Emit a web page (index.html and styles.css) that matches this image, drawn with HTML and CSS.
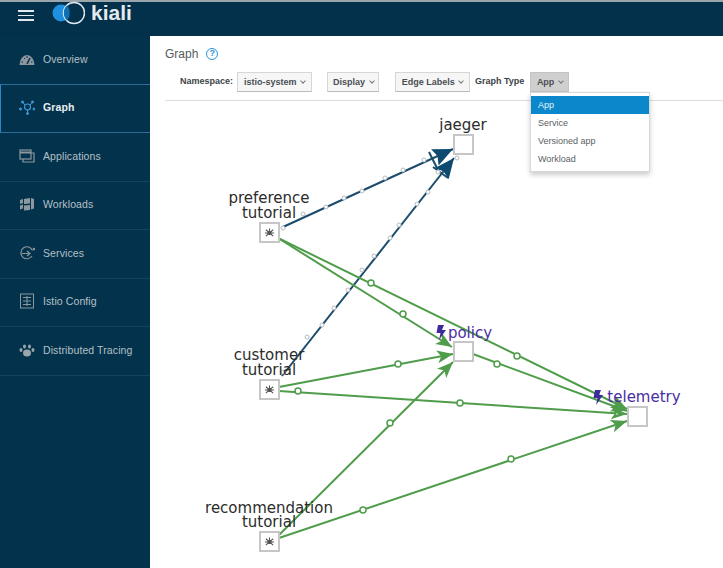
FILE: index.html
```html
<!DOCTYPE html>
<html lang="en">
<head>
<meta charset="UTF-8">
<meta name="viewport" content="width=device-width, initial-scale=1.0">
<title>Kiali - Graph</title>
<link rel="stylesheet" href="styles.css">
</head>
<body>
  <header class="topbar">
    <div class="burger"><span></span><span></span><span></span></div>
    <svg class="logo-mark" width="42" height="28" viewBox="0 0 42 28">
      <circle cx="18" cy="12" r="8.500" fill="#1f8fe0"/>
      <circle cx="31" cy="12" r="10.500" fill="#03304a" stroke="#dfeaf2" stroke-width="1.500"/>
      <path d="M20.800 12a10 10 0 0 1 3.200-7.400 8.500 8.500 0 0 1 2.500 7.400 8.500 8.500 0 0 1-2.500 7.400 10 10 0 0 1-3.200-7.400z" fill="#0f6fb5"/>
    </svg>
    <span class="logo-text">kiali</span>
  </header>

  <div class="page">
    <nav class="sidebar">
      <a class="nav-item">
        <svg class="nav-icon" viewBox="0 0 16 16"><path d="M.5 14A7.500 10 0 0 1 15.500 14z" fill="#8d979e"/><path d="M8 13 11 7" stroke="#03304a" stroke-width="1.500"/><path d="M2.500 11h1.500M5 7l1 1M8 5v2M12 11h1.500" stroke="#03304a"/></svg>
        Overview
      </a>
      <a class="nav-item active">
        <svg class="nav-icon" viewBox="0 0 16 16" fill="#3f9bdc" stroke="#3f9bdc"><circle cx="8.500" cy="8" r="3" fill="none" stroke-width="1.200"/><path d="M6 6 4 3.500M11 6l2-2.500M8.500 11v2.500" stroke-width="1"/><circle cx="3.500" cy="3" r="1"/><circle cx="13.500" cy="3" r="1"/><circle cx="1.500" cy="10" r="1"/><circle cx="15" cy="10" r="1"/><circle cx="8.500" cy="14.500" r="1"/></svg>
        Graph
      </a>
      <a class="nav-item">
        <svg class="nav-icon" viewBox="0 0 16 16" fill="none" stroke="#8d979e" stroke-width="1.200"><rect x="1" y="2" width="11" height="9"/><path d="M1 4.500h11" stroke-width="2"/><path d="M12 5h3v9H4v-3"/></svg>
        Applications
      </a>
      <a class="nav-item">
        <svg class="nav-icon" viewBox="0 0 16 16" fill="#8d979e"><path d="M1 4l3-1v4l-3 1zM1 9.500l3-1v4l-3 1zM5 3l6-1v5.500l-6 .5zM5 9.500l6-.5v5l-6 .5zM12 2l3 1v9.500l-3 1z"/></svg>
        Workloads
      </a>
      <a class="nav-item">
        <svg class="nav-icon" viewBox="0 0 16 16" fill="none" stroke="#8d979e" stroke-width="1.200"><path d="M13.500 5.500A6 6 0 1 0 13 11"/><path d="M3 8.500h8M8 6l3 2.500L8 11"/><circle cx="15" cy="4" r=".7"/></svg>
        Services
      </a>
      <a class="nav-item">
        <svg class="nav-icon" viewBox="0 0 16 16" fill="none" stroke="#8d979e"><rect x="1.500" y="1" width="13" height="14"/><path d="M4 4.500h8M4 8h8M4 11.500h8M8 3v10"/></svg>
        Istio Config
      </a>
      <a class="nav-item">
        <svg class="nav-icon" viewBox="0 0 16 16" fill="#9aa4ab"><ellipse cx="8" cy="11" rx="4" ry="3.500"/><ellipse cx="5.500" cy="4.500" rx="1.500" ry="2"/><ellipse cx="10.500" cy="4.500" rx="1.500" ry="2"/><ellipse cx="2" cy="8" rx="1.500" ry="2"/><ellipse cx="14" cy="8" rx="1.500" ry="2"/></svg>
        Distributed Tracing
      </a>
    </nav>

    <main class="content">
      <div class="title-row">
        <h1 class="title">Graph</h1>
        <span class="help">?</span>
      </div>

      <div class="toolbar">
        <label class="tool-label">Namespace:</label>
        <button class="btn btn-namespace">istio-system <i class="caret"></i></button>
        <button class="btn btn-display">Display <i class="caret"></i></button>
        <button class="btn btn-edges">Edge Labels <i class="caret"></i></button>
        <label class="tool-label tool-label-type">Graph Type</label>
        <button class="btn btn-open">App <i class="caret"></i></button>
        <ul class="menu">
          <li class="menu-item selected">App</li>
          <li class="menu-item">Service</li>
          <li class="menu-item">Versioned app</li>
          <li class="menu-item">Workload</li>
        </ul>
      </div>

      <svg class="graph" viewBox="150 101 573 467">
        <defs>
          <marker id="green-head" markerWidth="17" markerHeight="15" refX="16" refY="7.500" markerUnits="userSpaceOnUse" orient="auto">
            <path d="M0 1 16 7.500 0 14 4 7.500z" fill="#4f9d4b"/>
          </marker>
          <marker id="blue-head" markerWidth="21" markerHeight="20" refX="20" refY="10" markerUnits="userSpaceOnUse" orient="auto">
            <path d="M0 1 20 10 0 19 3 10z" fill="#0d4a70"/>
          </marker>
          <symbol id="app-icon" viewBox="0 0 12 12">
            <circle cx="6" cy="6.500" r="2.200" fill="#3a3a3a"/>
            <path d="M2 3 10 10M10 3 2 10M6 6.500V1.500M1 6.500h10" stroke="#555" stroke-width="1.200" fill="none"/>
          </symbol>
        </defs>

        <g class="edges-blue">
          <path d="M283 227 453 149" marker-end="url(#blue-head)"/>
          <path d="M282 376 454 158" marker-end="url(#blue-head)"/>
          <path d="M429 152 437 168M433 167 448 178"/>
        </g>
        <g class="edges-green">
          <path d="M278 238 452 347" marker-end="url(#green-head)"/>
          <path d="M278 238 627 409" marker-end="url(#green-head)"/>
          <path d="M279 387 453 354" marker-end="url(#green-head)"/>
          <path d="M279 391 627 414" marker-end="url(#green-head)"/>
          <path d="M279 535 453 362" marker-end="url(#green-head)"/>
          <path d="M279 538 627 421" marker-end="url(#green-head)"/>
          <path d="M473 354 627 411" marker-end="url(#green-head)"/>
        </g>

        <g class="dots-blue">
          <circle cx="283" cy="228" r="2"/><circle cx="303" cy="214" r="2"/><circle cx="326" cy="207" r="2"/>
          <circle cx="344" cy="198" r="2"/><circle cx="362" cy="191" r="2"/><circle cx="385" cy="178" r="2"/>
          <circle cx="403" cy="170" r="2"/><circle cx="424" cy="160" r="2"/><circle cx="457" cy="158" r="2"/>
          <circle cx="438" cy="172" r="2"/><circle cx="428" cy="192" r="2"/><circle cx="417" cy="204" r="2"/>
          <circle cx="399" cy="225" r="2"/><circle cx="390" cy="238" r="2"/><circle cx="374" cy="256" r="2"/>
          <circle cx="362" cy="270" r="2"/><circle cx="348" cy="290" r="2"/><circle cx="334" cy="308" r="2"/>
          <circle cx="322" cy="325" r="2"/><circle cx="307" cy="337" r="2"/><circle cx="283" cy="372" r="2"/>
        </g>
        <g class="dots-green">
          <circle cx="371" cy="283" r="3"/><circle cx="403" cy="314" r="3"/><circle cx="517" cy="356" r="3"/>
          <circle cx="398" cy="364" r="3"/><circle cx="298" cy="391" r="3"/><circle cx="460" cy="403" r="3"/>
          <circle cx="390" cy="423" r="3"/><circle cx="363" cy="510" r="3"/><circle cx="511" cy="459" r="3"/>
          <circle cx="497" cy="364" r="3"/><circle cx="617" cy="414" r="1.500"/>
        </g>

        <g class="nodes">
          <rect x="454" y="135" width="19" height="19"/>
          <rect x="260" y="223" width="19" height="19"/>
          <rect x="260" y="380" width="19" height="19"/>
          <rect x="260" y="532" width="19" height="19"/>
          <rect x="454" y="342" width="19" height="19"/>
          <rect x="628" y="407" width="19" height="19"/>
        </g>
        <use href="#app-icon" x="264" y="227" width="11" height="11"/>
        <use href="#app-icon" x="264" y="384" width="11" height="11"/>
        <use href="#app-icon" x="264" y="536" width="11" height="11"/>

        <g class="labels">
          <text x="463" y="130">jaeger</text>
          <text y="203"><tspan x="269">preference</tspan><tspan x="269" dy="15">tutorial</tspan></text>
          <text y="360"><tspan x="269">customer</tspan><tspan x="269" dy="15">tutorial</tspan></text>
          <text y="513"><tspan x="269">recommendation</tspan><tspan x="269" dy="14">tutorial</tspan></text>
        </g>
        <g class="labels-service">
          <text x="470" y="338">policy</text>
          <text x="644" y="402">telemetry</text>
        </g>
        <path class="bolt" d="M438 325h6l-2 5h4l-7 10 1.500-7h-4z"/>
        <path class="bolt" d="M595 390h6l-2 5h4l-7 10 1.500-7h-4z"/>
      </svg>
    </main>
  </div>
</body>
</html>
```

FILE: styles.css
```css
* {
  box-sizing: border-box;
}

html, body {
  height: 100%;
}

body {
  margin: 0;
  overflow: hidden;
  display: flex;
  flex-direction: column;
  font-family: "Liberation Sans", Arial, sans-serif;
  background: #fff;
  color: #3d4348;
}

/* top bar */
.topbar {
  height: 36px;
  flex: none;
  display: flex;
  align-items: center;
  padding-left: 18px;
  background: #03304a;
  border-top: 2px solid #9aa5ab;
}

.burger {
  width: 16px;
  display: flex;
  flex-direction: column;
  gap: 3px;
  margin-top: -7px;
}

.burger span {
  height: 1.500px;
  background: #e3e9ed;
}

.logo-mark {
  margin: -9px 0 0 9px;
}

.logo-text {
  margin: -13px 0 0 6px;
  color: #e4ebef;
  font-size: 21px;
  font-weight: 700;
}

.page {
  flex: 1;
  display: flex;
  min-height: 0;
}

/* left nav */
.sidebar {
  width: 150px;
  flex: none;
  background: #03324c;
}

.nav-item {
  height: 48.500px;
  display: flex;
  align-items: center;
  gap: 8px;
  padding: 0 0 2px 19px;
  border-bottom: 1px solid #12445f;
  color: #b4c0c8;
  font-size: 10.500px;
  letter-spacing: .1px;
}

.nav-item.active {
  color: #e9eef1;
  font-weight: 700;
  border-left: 1px solid #2f86c2;
  padding-left: 18px;
  border-top: 1px solid #2a6f9c;
  border-bottom: 1px solid #2a6f9c;
  margin-top: -1px;
  height: 49.500px;
}

.nav-icon {
  width: 16px;
  height: 16px;
  flex: none;
}

/* main area */
.content {
  flex: 1;
  min-width: 0;
  display: flex;
  flex-direction: column;
}

.title-row {
  display: flex;
  align-items: center;
  gap: 8px;
  padding: 7px 0 0 15px;
  height: 28px;
}

.title {
  margin: 0;
  font-size: 12px;
  font-weight: 400;
  color: #555b60;
}

.help {
  width: 12px;
  height: 12px;
  border: 1.500px solid #2a94d6;
  border-radius: 50%;
  color: #2a94d6;
  font-size: 9px;
  font-weight: 700;
  line-height: 9px;
  text-align: center;
}

.toolbar {
  position: relative;
  height: 37px;
  flex: none;
  margin-left: 15px;
  padding: 8px 0 0 15px;
  display: flex;
  align-items: flex-start;
  border-bottom: 1px solid #dcdcdc;
}

.tool-label {
  font-size: 9px;
  font-weight: 700;
  line-height: 19px;
  margin-right: 4px;
}

.tool-label-type {
  margin: 0 5px 0 5px;
}

.btn {
  height: 20px;
  padding: 0 5px;
  border: 1px solid #d6d6d6;
  border-bottom-color: #bbb;
  background: #f6f6f6;
  color: #4a4f54;
  font-family: inherit;
  font-size: 9px;
  font-weight: 700;
  white-space: nowrap;
}

.btn-namespace {
  width: 75px;
  margin-right: 15px;
}

.btn-display {
  width: 52px;
  margin-right: 16px;
}

.btn-edges {
  width: 75px;
}

.btn-open {
  width: 39px;
  margin-left: 1px;
  background: #cfcfcf;
  border-color: #c4c4c4;
}

.caret {
  display: inline-block;
  width: 4px;
  height: 4px;
  margin: 0 0 2px 2px;
  border-right: 1px solid #777;
  border-bottom: 1px solid #777;
  transform: rotate(45deg);
}

.menu {
  position: absolute;
  top: 28px;
  left: 365px;
  z-index: 2;
  width: 120px;
  height: 80px;
  margin: 0;
  padding: 3px 0;
  list-style: none;
  background: #fff;
  border: 1px solid #d8d8d8;
  box-shadow: 0 3px 5px rgba(0, 0, 0, .2);
}

.menu-item {
  height: 18px;
  padding-left: 7px;
  font-size: 9px;
  line-height: 18px;
  color: #5a5f63;
}

.menu-item.selected {
  background: #0b87cc;
  color: #e8f3fa;
}

/* topology */
.graph {
  display: block;
  width: 573px;
  height: 467px;
}

.edges-blue path {
  fill: none;
  stroke: #1c4c6c;
  stroke-width: 2;
}

.edges-green path {
  fill: none;
  stroke: #4f9d4b;
  stroke-width: 2;
}

.dots-blue circle {
  fill: #fff;
  stroke: #b4bcc2;
}

.dots-green circle {
  fill: #fff;
  stroke: #4f9d4b;
  stroke-width: 1.500;
}

.nodes rect {
  fill: #fff;
  stroke: #c6c6c6;
  stroke-width: 2;
}

.labels text,
.labels-service text {
  font-family: "DejaVu Sans", sans-serif;
  font-size: 15px;
  text-anchor: middle;
}

.labels text {
  fill: #2c2c2c;
}

.labels-service text {
  fill: #4a2fa2;
}

.bolt {
  fill: #3d2a9c;
}
```
